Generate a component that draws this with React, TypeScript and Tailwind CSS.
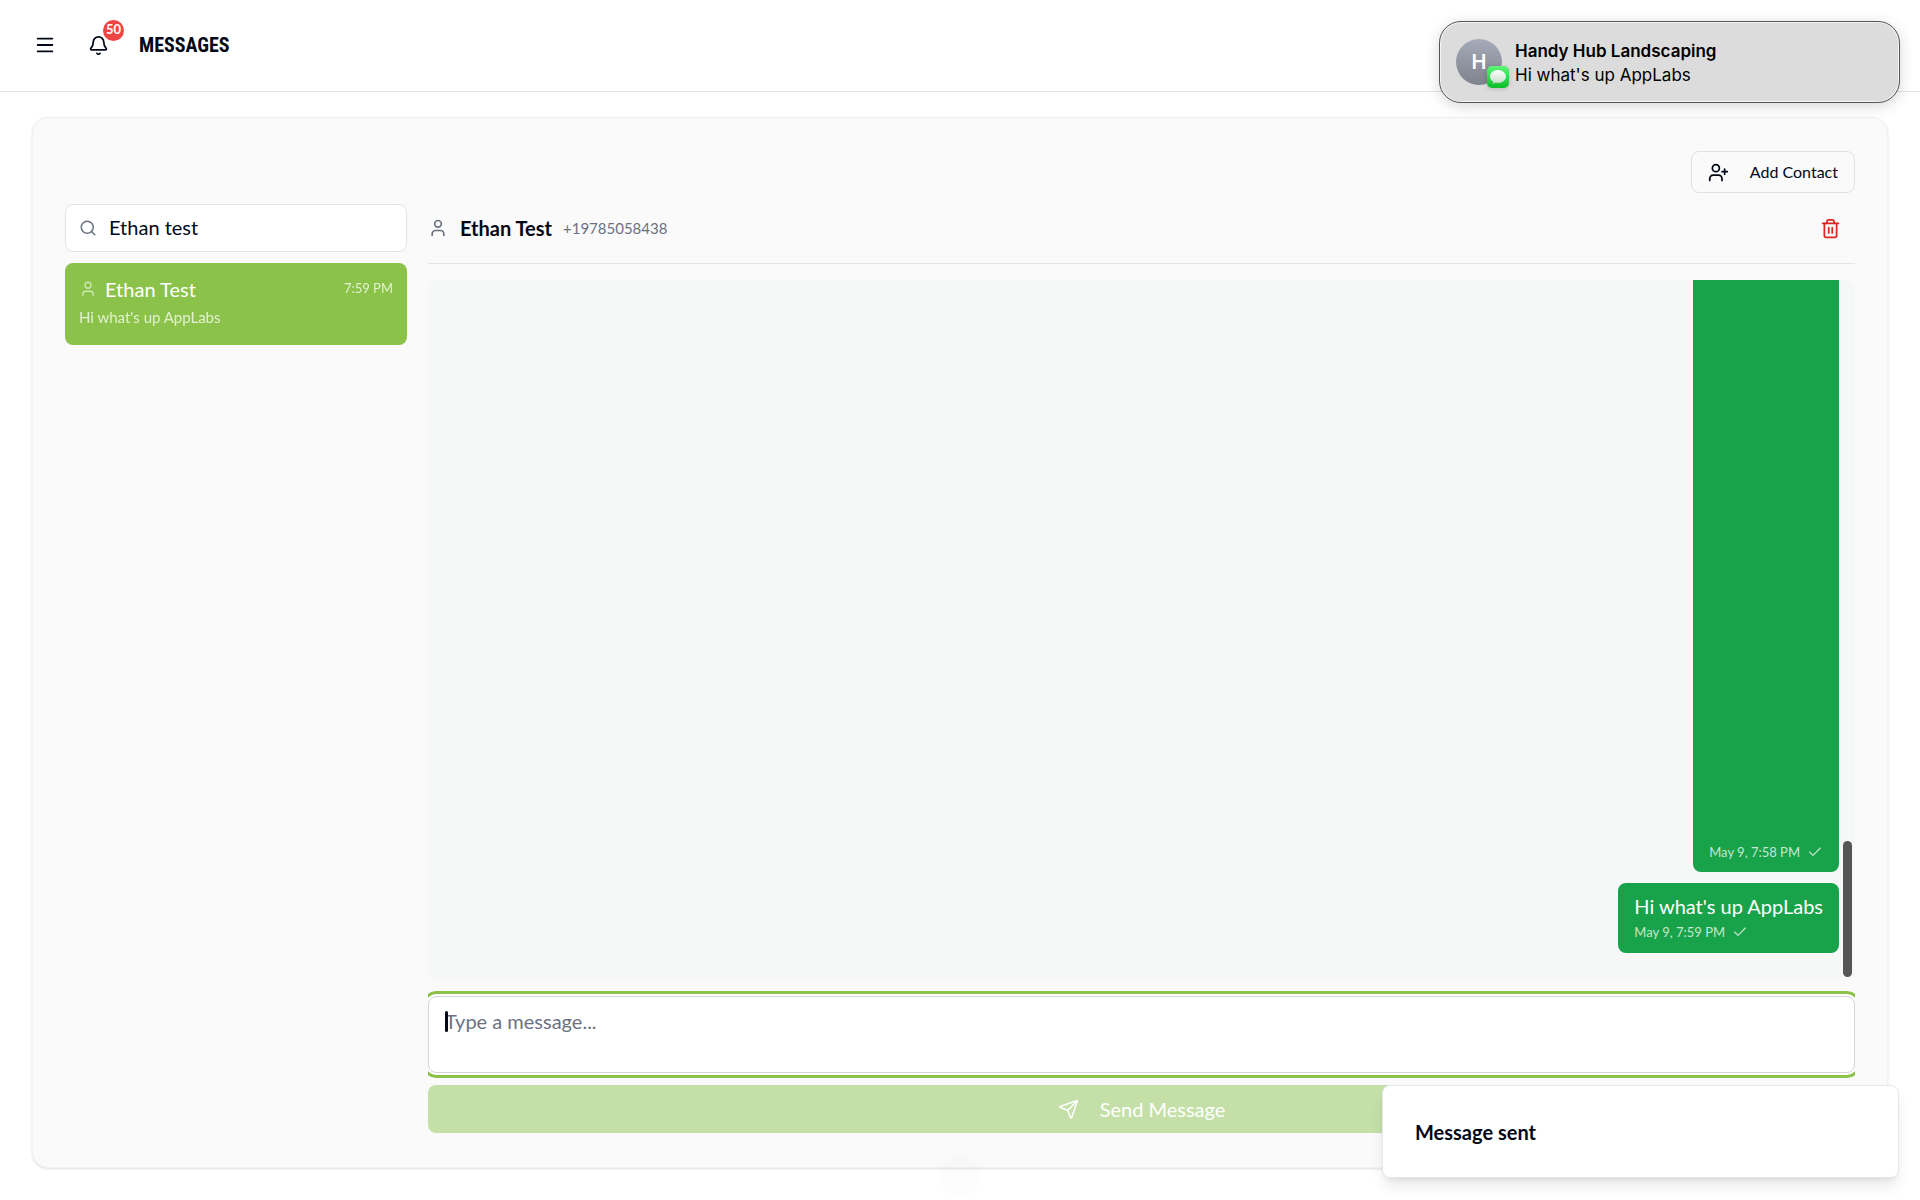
import {
  Bell,
  Check,
  Menu,
  Search,
  Send,
  Trash2,
  User,
  UserPlus,
} from "lucide-react";

type Message = { id: number; text: string; time: string; tall?: boolean };

const messages: Message[] = [
  { id: 1, text: "", time: "May 9, 7:58 PM", tall: true },
  { id: 2, text: "Hi what's up AppLabs", time: "May 9, 7:59 PM" },
];

function Header() {
  return (
    <header className="flex h-23 shrink-0 items-center border-b border-[#e2e4e8] px-[34px] pb-px">
      <button type="button" aria-label="Open menu" className="text-[#020817]">
        <Menu className="size-[22px]" strokeWidth={2} />
      </button>
      <button
        type="button"
        aria-label="Notifications"
        className="relative ml-8 text-[#020817]"
      >
        <Bell className="size-[21px]" strokeWidth={2} />
        <span className="absolute -top-[15px] left-[15px] flex size-[21px] items-center justify-center rounded-full bg-[#ef4444] text-[13px] font-bold text-white">
          50
        </span>
      </button>
      <h1 className="ml-[30px] font-['Roboto_Condensed','Liberation_Sans_Narrow','Roboto',sans-serif] text-[20px] font-bold text-[#020817]">
        MESSAGES
      </h1>
    </header>
  );
}

function Sidebar() {
  return (
    <aside className="flex w-[342px] shrink-0 flex-col gap-[11px]">
      <div className="relative">
        <Search className="absolute top-[15px] left-[14px] size-[18px] text-gray-500" />
        <input
          type="text"
          aria-label="Search contacts"
          defaultValue="Ethan test"
          className="h-12 w-full rounded-lg border border-[#e0e2e6] bg-white pr-4 pb-0.5 pl-[43px] text-[20px] text-[#020817] outline-none"
        />
      </div>
      <button
        type="button"
        className="flex h-[82px] flex-col rounded-lg bg-[#8bc34a] px-[14px] pt-3 text-left text-white"
      >
        <span className="flex w-full items-center">
          <User className="size-[18px] opacity-60" strokeWidth={1.75} />
          <span className="ml-2 text-[20px] leading-7">Ethan Test</span>
          <span className="ml-auto text-[13px] opacity-75">7:59 PM</span>
        </span>
        <span className="text-[15px] leading-7 opacity-75">
          Hi what's up AppLabs
        </span>
      </button>
    </aside>
  );
}

function Bubble({ message }: { message: Message }) {
  return (
    <li
      className={`flex shrink-0 flex-col rounded-lg bg-[#18a34a] px-4 text-white ${
        message.tall ? "h-[1400px] justify-end pb-2" : "h-[70px] pt-[9px]"
      }`}
    >
      {message.text && (
        <p className="text-[20px] leading-7">{message.text}</p>
      )}
      <span className="flex items-center gap-[7px] text-[13px] leading-6 text-white/75">
        {message.time}
        <Check className="size-4" strokeWidth={1.75} />
      </span>
    </li>
  );
}

function Conversation() {
  return (
    <section className="flex min-w-0 flex-1 flex-col overflow-hidden">
      <div className="flex h-[60px] shrink-0 items-start border-b border-[#e2e4e8]">
        <div className="flex h-12 w-full items-center pr-[14px]">
          <User className="size-5 text-gray-500" />
          <h2 className="ml-3 text-[20px] font-bold text-[#020817]">
            Ethan Test
          </h2>
          <span className="ml-[11px] text-[15px] text-gray-500">
            +19785058438
          </span>
          <button
            type="button"
            aria-label="Delete conversation"
            className="ml-auto text-[#dc2626]"
          >
            <Trash2 className="size-[21px]" />
          </button>
        </div>
      </div>

      <div className="relative mt-4 flex min-h-0 flex-1 flex-col overflow-hidden rounded-lg bg-[#f6f8f8]">
        <ol className="flex min-h-0 flex-1 flex-col items-end justify-end gap-[11px] pr-4 pb-[27px]">
          {messages.map((m) => (
            <Bubble key={m.id} message={m} />
          ))}
        </ol>
        <div className="absolute right-[3px] bottom-[3px] h-[136px] w-[9px] rounded-full bg-[#555]" />
      </div>

      <form
        className="flex shrink-0 flex-col pt-4"
        onSubmit={(e) => e.preventDefault()}
      >
        <div className="relative">
          <textarea
            aria-label="Message"
            placeholder="Type a message..."
            className="block h-[77px] w-full resize-none rounded-lg border border-gray-300 bg-white px-4 py-2.5 text-[20px] leading-7 text-[#020817] ring-3 ring-[#8bc34a] ring-offset-2 ring-offset-white outline-none placeholder:text-gray-500"
          />
          <span className="absolute top-[15px] left-[17px] h-[21px] w-[3px] rounded-full bg-[#020817]" />
        </div>
        <button
          type="submit"
          className="mt-3 flex h-12 items-center justify-center gap-[21px] rounded-lg bg-[#c5dfa8] text-[20px] text-white"
        >
          <Send className="size-[21px]" strokeWidth={1.75} />
          Send Message
        </button>
      </form>
    </section>
  );
}

function SystemNotification() {
  return (
    <div
      role="status"
      className="absolute top-[21px] right-5 flex h-[82px] w-[461px] items-center rounded-[22px] border border-[#555] bg-[#dcdcdc] px-4 font-['Inter',sans-serif] text-black shadow-[inset_0_0_0_1px_#f5f5f5,0_3px_14px_rgba(0,0,0,0.16)]"
    >
      <div className="relative flex size-[46px] items-center justify-center rounded-full bg-linear-to-b from-[#a5abb9] to-[#7f828c] text-[20px] font-semibold text-white">
        H
        <svg
          viewBox="0 0 22 22"
          className="absolute -right-[7px] -bottom-[3px] size-[22px] drop-shadow-sm"
          aria-hidden="true"
        >
          <defs>
            <linearGradient id="app-green" x1="0" y1="0" x2="0" y2="1">
              <stop offset="0" stopColor="#5df777" />
              <stop offset="1" stopColor="#0bbd29" />
            </linearGradient>
            <linearGradient id="app-bubble" x1="0" y1="0" x2="0" y2="1">
              <stop offset="0" stopColor="#ffffff" />
              <stop offset="1" stopColor="#c5dcc6" />
            </linearGradient>
          </defs>
          <rect width="22" height="22" rx="5" fill="url(#app-green)" />
          <path
            d="M11 4C6.600 4 3 6.900 3 10.500c0 2.200 1.300 4.100 3.300 5.300-.1.800-.5 1.400-1.100 1.900 1.300 0 2.500-.4 3.400-1.100.8.200 1.600.3 2.400.3 4.400 0 8-2.900 8-6.400S15.400 4 11 4z"
            fill="url(#app-bubble)"
          />
        </svg>
      </div>
      <div className="ml-[13px] pt-0.5 text-[17px] leading-6">
        <p className="font-semibold">Handy Hub Landscaping</p>
        <p>Hi what's up AppLabs</p>
      </div>
    </div>
  );
}

export default function App() {
  return (
    <div className="relative flex h-screen flex-col overflow-hidden bg-white font-['Lato',sans-serif]">
      <Header />
      <main className="flex min-h-0 flex-1 flex-col px-8 pt-[25px] pb-8">
        <div className="flex min-h-0 flex-1 flex-col rounded-2xl border border-[#f1f1f2] bg-[#fafafa] px-8 pt-[33px] pb-[34px] shadow-sm">
          <button
            type="button"
            className="flex h-[42px] shrink-0 items-center gap-[21px] self-end rounded-lg border border-[#e0e2e6] px-4 text-[16px] text-[#020817]"
          >
            <UserPlus className="size-[21px]" />
            Add Contact
          </button>
          <div className="mt-[11px] flex min-h-0 flex-1 gap-[21px]">
            <Sidebar />
            <Conversation />
          </div>
        </div>
      </main>

      <div className="absolute bottom-[3px] left-1/2 size-[42px] -translate-x-1/2 rounded-full bg-black/[0.01]" />
      <SystemNotification />
      <div
        role="status"
        className="absolute right-[21px] bottom-[22px] flex h-[93px] w-[517px] items-center rounded-lg border border-gray-200 bg-white px-8 text-[20px] font-bold text-[#020817] shadow-lg"
      >
        Message sent
      </div>
    </div>
  );
}
